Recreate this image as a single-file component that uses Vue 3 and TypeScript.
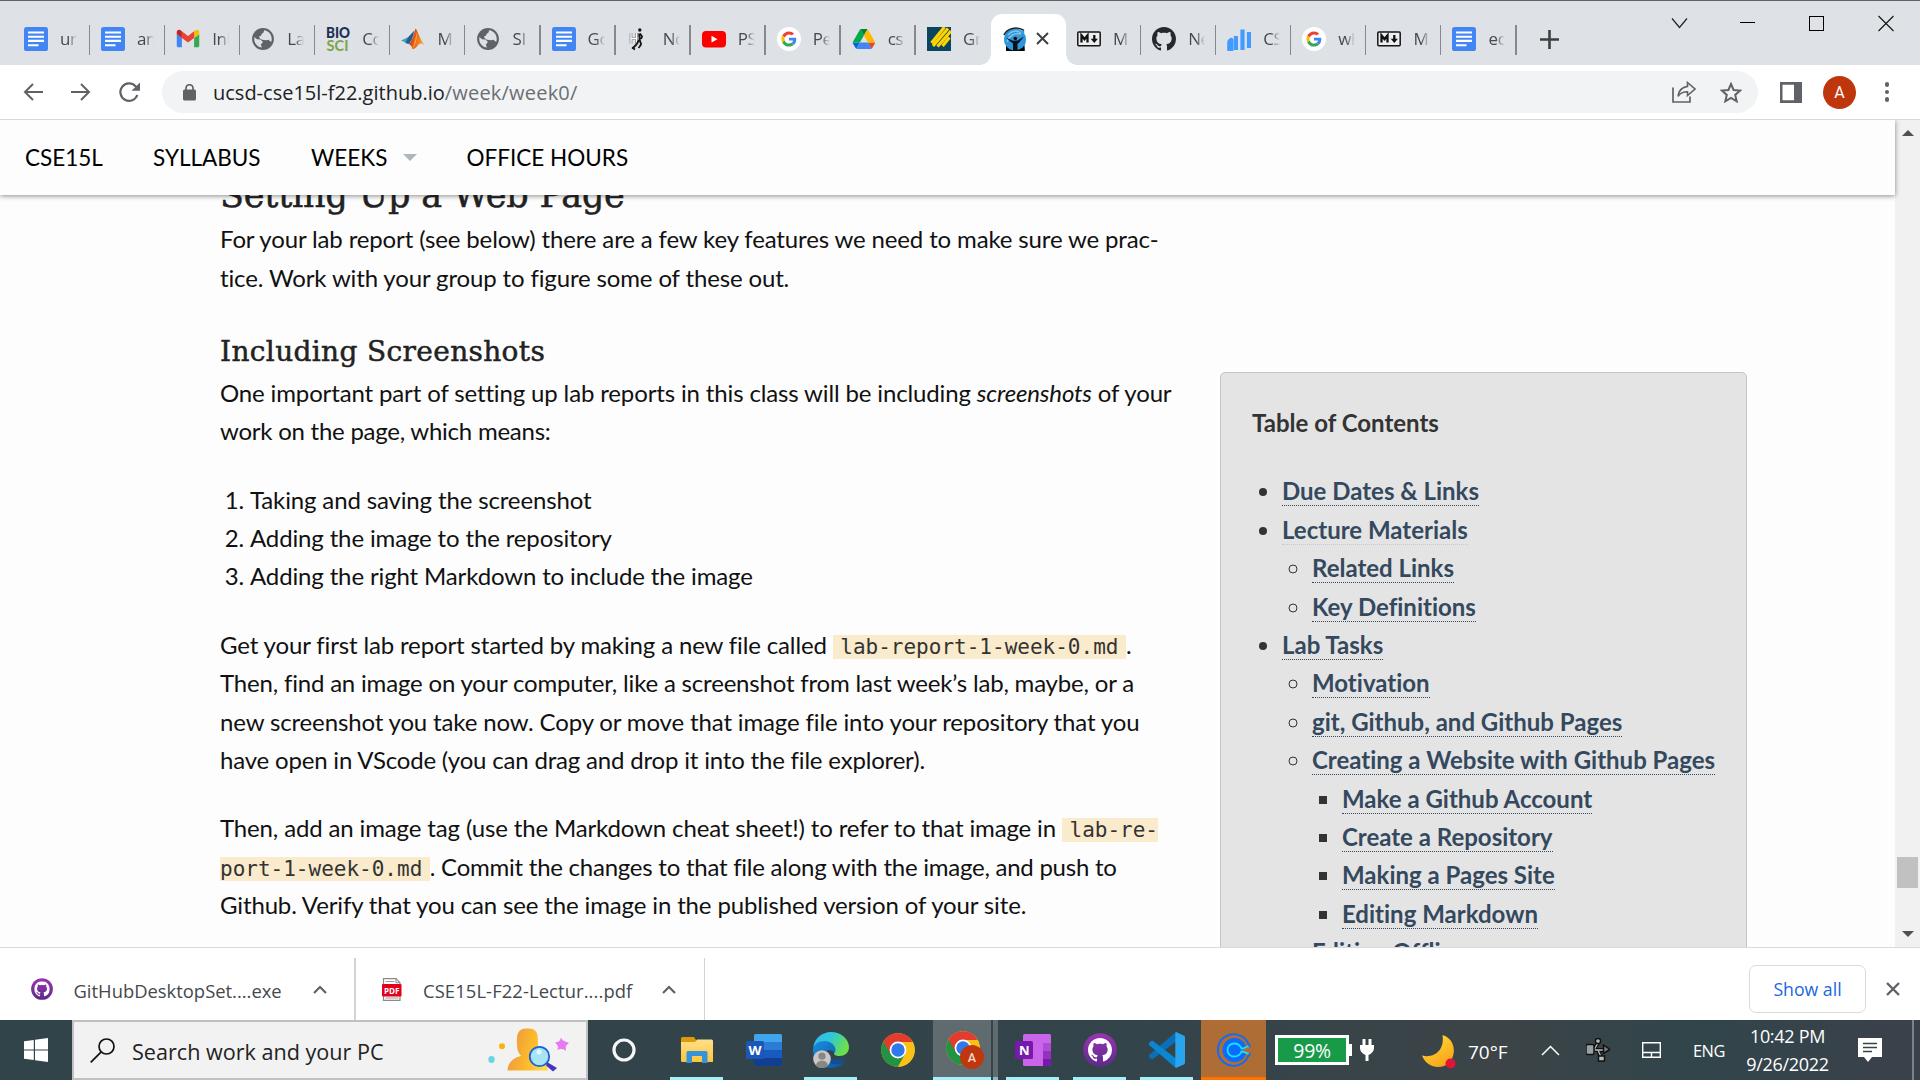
<script setup lang="ts">
interface Tab { icon: string; label: string; active?: boolean; sep?: boolean }
interface TocItem { text: string; level: number; faint?: boolean }

const tabs: Tab[] = [
  { icon: 'doc', label: 'uni', sep: true },
  { icon: 'doc', label: 'ann', sep: true },
  { icon: 'gmail', label: 'Inb', sep: true },
  { icon: 'globe', label: 'Lab', sep: true },
  { icon: 'biosci', label: 'Co', sep: true },
  { icon: 'matlab', label: 'M', sep: true },
  { icon: 'globe', label: 'SI I', sep: true },
  { icon: 'doc', label: 'Go', sep: true },
  { icon: 'runner', label: 'No', sep: true },
  { icon: 'youtube', label: 'PS', sep: true },
  { icon: 'google', label: 'Pe', sep: true },
  { icon: 'drive', label: 'cs', sep: true },
  { icon: 'gradescope', label: 'Gr' },
  { icon: 'person', label: '', active: true },
  { icon: 'markdown', label: 'M', sep: true },
  { icon: 'github', label: 'Ne', sep: true },
  { icon: 'chart', label: 'CS', sep: true },
  { icon: 'google', label: 'wh', sep: true },
  { icon: 'markdown', label: 'M', sep: true },
  { icon: 'doc', label: 'ec', sep: true },
]

const toc: TocItem[] = [
  { text: 'Due Dates & Links', level: 0 },
  { text: 'Lecture Materials', level: 0, faint: true },
  { text: 'Related Links', level: 1 },
  { text: 'Key Definitions', level: 1 },
  { text: 'Lab Tasks', level: 0 },
  { text: 'Motivation', level: 1 },
  { text: 'git, Github, and Github Pages', level: 1 },
  { text: 'Creating a Website with Github Pages', level: 1 },
  { text: 'Make a Github Account', level: 2 },
  { text: 'Create a Repository', level: 2 },
  { text: 'Making a Pages Site', level: 2 },
  { text: 'Editing Markdown', level: 2 },
  { text: 'Editing Offline', level: 1 },
]
</script>

<template>
  <svg class="sprite" width="0" height="0" aria-hidden="true">
    <defs>
      <linearGradient id="g-edge" x1="0" y1="0" x2="1" y2="0.4"><stop offset="0" stop-color="#35b8f0" /><stop offset="0.5" stop-color="#2fc8d8" /><stop offset="1" stop-color="#6be04a" /></linearGradient>
      <linearGradient id="g-edge2" x1="0" y1="0" x2="1" y2="1"><stop offset="0" stop-color="#1a8fe0" /><stop offset="1" stop-color="#0c4f9e" /></linearGradient>
      <linearGradient id="g-avatar" x1="0" y1="0.3" x2="1" y2="0.6"><stop offset="0" stop-color="#ec9440" /><stop offset="0.6" stop-color="#fdbb2c" /><stop offset="1" stop-color="#ffd84a" /></linearGradient>
      <linearGradient id="g-purple" x1="0" y1="0" x2="0" y2="1"><stop offset="0" stop-color="#9a34b0" /><stop offset="1" stop-color="#5c2a8c" /></linearGradient>
      <linearGradient id="g-folder" x1="0" y1="0" x2="0" y2="1"><stop offset="0" stop-color="#ffe08a" /><stop offset="1" stop-color="#fbc53c" /></linearGradient>
      <linearGradient id="g-moon" x1="0" y1="0" x2="0.6" y2="1"><stop offset="0" stop-color="#ffe23a" /><stop offset="1" stop-color="#f9a51a" /></linearGradient>
      <linearGradient id="g-matlab" x1="0" y1="0" x2="1" y2="0.3"><stop offset="0" stop-color="#7a1c10" /><stop offset="0.45" stop-color="#e8581c" /><stop offset="1" stop-color="#f9a02a" /></linearGradient>
    </defs>
    <symbol id="i-doc" viewBox="0 0 24 24">
      <rect width="24" height="24" rx="2.6" fill="#4285f4" />
      <path d="M4 5.500h16M4 9.800h16M4 13.900h16M4 18.200h10.500" stroke="#fff" stroke-width="2.100" />
    </symbol>
    <symbol id="i-gmail" viewBox="49 33 94 94">
      <path fill="#4285f4" d="M58 112h14V76L52 61v45c0 3.320 2.690 6 6 6" /><path fill="#34a853" d="M120 112h14c3.320 0 6-2.690 6-6V61l-20 15" />
      <path fill="#fbbc04" d="M120 50v26l20-15v-8c0-7.420-8.470-11.650-14.400-7.200" /><path fill="#ea4335" d="M72 76V50l24 18 24-18v26L96 94" />
      <path fill="#c5221f" d="M52 53v8l20 15V50l-5.600-4.200c-5.940-4.450-14.400-.22-14.400 7.200" />
    </symbol>
    <symbol id="i-globe" viewBox="1 1 22 22">
      <circle cx="12" cy="12" r="10" fill="#5f6368" />
      <path fill="#dee1e6" d="M11 19.900c-3.950-.49-7-3.850-7-7.930 0-.62.080-1.210.210-1.790L6.500 12.200l3.200.3 2.300 2.300-2 2.200z" />
      <path fill="#dee1e6" d="M8.200 9.200c1.200.7 2.300-.2 2.500-1.500.2-1.200 1.700-.8 2-2.300l.3-1.400c4 .5 7 3.800 7 8 0 1-.2 1.900-.5 2.700l-2.600-2.100-2.100.6-3.700-.6-2-1z" />
    </symbol>
    <symbol id="i-matlab" viewBox="0 0 24 24">
      <path fill="#3ba0c8" d="M0 13.500 7.500 10l3.500-3.500 2 1-5 9-3.200-.7z" /><path fill="#275c86" d="m7 10.500 4-4.500 2.500-2.500-3 10-3 3.500-3-1z" />
      <path fill="url(#g-matlab)" d="M14.500 1.500c2 1.500 4 10 9 16.500-2.500-2-4.500-2.200-6.500.3-1.600 2-3.200 3.700-5.500 4-.5-2.600-1.500-4.300-3.700-5.300 3.500-2 4.700-9.500 6.700-15.500z" />
      <path fill="#ffb43c" d="M15.500 5c.5 4 1 8.500-4 17.300.5-2.500 3.500-9 4-17.300z" />
    </symbol>
    <symbol id="i-runner" viewBox="0 0 24 24">
      <path d="M4 6v11M9.500 6v11M4 11.500h5.500" fill="none" stroke="#777" stroke-width="2.600" /><path d="M4 6v11M9.500 6v11M4 11.500h5.500" fill="none" stroke="#fff" stroke-width="1.300" />
      <circle cx="12.800" cy="3" r="1.700" fill="#151515" /><path d="m12 6.500.8 6.500M12.500 12.500l1.500 4.500-1 2.500M12 13l-2.500 4.500-4 4M13 6.500l2 3-1 2.500" fill="none" stroke="#151515" stroke-width="1.900" /><path d="m5 20.500 3 2M13 19l-1.500 2" stroke="#151515" stroke-width="1.600" />
    </symbol>
    <symbol id="i-youtube" viewBox="0 0 24 24"><rect y="4" width="24" height="16.500" rx="4" fill="#f00" /><path d="m9.500 8.800 6 3.400-6 3.400z" fill="#fff" /></symbol>
    <symbol id="i-google" viewBox="-14 -14 76 76">
      <circle cx="24" cy="24" r="38" fill="#fff" />
      <path fill="#ea4335" d="M24 9.500c3.540 0 6.710 1.220 9.210 3.600l6.850-6.850C35.900 2.380 30.470 0 24 0 14.620 0 6.510 5.380 2.560 13.220l7.980 6.190C12.430 13.720 17.740 9.500 24 9.500z" />
      <path fill="#4285f4" d="M46.980 24.550c0-1.570-.15-3.090-.38-4.550H24v9.020h12.940c-.58 2.960-2.260 5.480-4.780 7.180l7.730 6c4.510-4.180 7.090-10.360 7.090-17.650z" />
      <path fill="#fbbc05" d="M10.530 28.590c-.48-1.450-.76-2.990-.76-4.590s.27-3.140.76-4.590l-7.980-6.190C.92 16.460 0 20.120 0 24c0 3.880.92 7.540 2.560 10.780l7.970-6.190z" />
      <path fill="#34a853" d="M24 48c6.480 0 11.930-2.130 15.890-5.810l-7.730-6c-2.150 1.450-4.920 2.300-8.160 2.300-6.260 0-11.570-4.220-13.470-9.910l-7.980 6.190C6.510 42.620 14.620 48 24 48z" />
    </symbol>
    <symbol id="i-drive" viewBox="-3 -8 94 94">
      <path fill="#0066da" d="m6.600 66.850 3.850 6.650c.8 1.400 1.950 2.500 3.300 3.300l13.750-23.800H0c0 1.550.4 3.100 1.200 4.500z" />
      <path fill="#00ac47" d="M43.650 25 29.900 1.200c-1.350.8-2.500 1.900-3.300 3.300l-25.400 44A9.060 9.060 0 0 0 0 53h27.500z" />
      <path fill="#ea4335" d="M73.550 76.800c1.350-.8 2.500-1.900 3.300-3.300l1.600-2.750 7.650-13.250c.8-1.400 1.200-2.950 1.200-4.500H59.800l5.850 11.500z" />
      <path fill="#00832d" d="M43.650 25 57.400 1.200C56.050.4 54.500 0 52.900 0H34.400c-1.600 0-3.150.45-4.500 1.200z" />
      <path fill="#4285f4" d="M59.800 53H27.500L13.750 76.800c1.350.8 2.900 1.200 4.500 1.200h50.800c1.600 0 3.150-.45 4.500-1.200z" />
      <path fill="#ffba00" d="m73.400 26.500-12.700-22c-.8-1.400-1.950-2.500-3.300-3.300L43.650 25l16.150 28h27.450c0-1.550-.4-3.100-1.200-4.500z" />
    </symbol>
    <symbol id="i-gradescope" viewBox="0 0 24 24"><rect width="24" height="24" fill="#0b455f" /><path d="m4.500 16 13-16M6 19 21 1.500M10.500 19.500 24 4M15.500 19l7-8.500" stroke="#ffd400" stroke-width="3.100" fill="none" /></symbol>
    <symbol id="i-person" viewBox="0 0 24 24">
      <rect x="3" y="17" width="18.500" height="7" fill="#050505" /><circle cx="12" cy="12.500" r="11" fill="#2e96dc" /><path d="M5 8c4-4 9-5 13-2M4 15c2-6 8-10 14-8" fill="none" stroke="#7cc4ee" stroke-width="1.500" />
      <path d="M1 8C4 1 14-1 21 3.500" fill="none" stroke="#222" stroke-width="1.600" /><path d="m3 10.800 7 3 4.500-.2 6.500-4.100-5 6.300-1.500 1V24h-4.500v-7.500l-2-1.500z" fill="#081018" /><circle cx="12.300" cy="11.500" r="1.800" fill="#081018" /><circle cx="20" cy="5" r="1.400" fill="#2aa3ee" /><circle cx="15" cy="8" r=".8" fill="#f08030" />
      <path d="M3 20v4h4c-1-1.500-2-3-4-4zm18.500 0v4h-4c1-1.500 2-3 4-4z" fill="#050505" />
    </symbol>
    <symbol id="i-markdown" viewBox="0 0 24 24">
      <rect x=".8" y="5" width="22.400" height="13.800" rx="1" fill="#eceef1" stroke="#151515" stroke-width="1.500" /><path d="M4.500 15.500v-7l3 3.600 3-3.600v7" fill="none" stroke="#111" stroke-width="2.300" /><path d="M17.300 8v6" stroke="#111" stroke-width="2.300" /><path d="M13.700 11.800h7.200l-3.600 4.200z" fill="#111" />
    </symbol>
    <symbol id="i-github" viewBox="0 0 16 16"><path fill="currentColor" d="M8 0C3.580 0 0 3.580 0 8c0 3.540 2.290 6.530 5.470 7.590.4.070.55-.17.55-.38 0-.19-.01-.82-.01-1.490-2.010.37-2.530-.49-2.690-.94-.09-.23-.48-.94-.82-1.130-.28-.15-.68-.52-.01-.53.63-.01 1.080.58 1.230.82.72 1.210 1.870.87 2.330.66.070-.52.280-.87.510-1.070-1.780-.2-3.640-.89-3.640-3.950 0-.87.310-1.590.820-2.150-.08-.2-.36-1.020.080-2.120 0 0 .67-.21 2.200.82.640-.18 1.320-.27 2-.27s1.360.09 2 .27c1.530-1.040 2.200-.82 2.200-.82.440 1.100.160 1.920.080 2.120.510.560.820 1.270.820 2.150 0 3.070-1.870 3.750-3.650 3.950.290.250.540.730.540 1.480 0 1.070-.01 1.930-.01 2.200 0 .210.150.460.550.380A8.010 8.010 0 0 0 16 8c0-4.420-3.580-8-8-8z" /></symbol>
    <symbol id="i-chart" viewBox="0 0 24 24"><path d="M2.300 23v-7q0-2 2-3v10zM8.900 23V9M15.500 23V2.500M22 21V5" stroke="#429bff" stroke-width="4.200" fill="none" stroke-linejoin="round" /></symbol>
    <symbol id="i-chrome" viewBox="0 0 34 34">
      <circle cx="17" cy="17" r="16.800" fill="#fbc116" />
      <path d="M9 17 2.450 8.600A16.800 16.800 0 0 0 17 33.800l7.300-12.600z" fill="#229342" /><path d="M17 33.800 24.600 20.500 24 12 17 8.900h14.700A16.800 16.800 0 0 1 17 33.800z" fill="#fbc116" /><path d="M17 9H31.700a16.800 16.800 0 0 0-29.250-.4L9.800 21.300z" fill="#e33b2e" />
      <circle cx="17" cy="17" r="8.400" fill="#fff" /><circle cx="17" cy="17" r="6.700" fill="#2f78ee" />
    </symbol>
    <symbol id="i-ghdesktop" viewBox="0 0 34 34"><circle cx="17" cy="17" r="16.800" fill="url(#g-purple)" /><svg x="5" y="5" width="24" height="24" viewBox="0 0 16 16" color="#fff"><use href="#i-github" /></svg></symbol>
    <symbol id="i-up" viewBox="0 0 14 9"><path d="m1 8 6-6 6 6" fill="none" stroke="#5f6368" stroke-width="2.200" /></symbol>
  </svg>

  <div class="screen">
    <header class="tabstrip">
      <div v-for="(t, i) in tabs" :key="i" class="tab" :class="{ active: t.active, sep: t.sep }">
        <svg v-if="t.icon === 'biosci'" class="favicon" width="24" height="24" viewBox="0 0 24 24">
          <text x="0" y="11.300" font-family="Lato, sans-serif" font-weight="900" font-size="14.800" textLength="24" lengthAdjust="spacingAndGlyphs" fill="#1c2f57">BIO</text>
          <text x="0.500" y="23.600" font-family="Lato, sans-serif" font-weight="700" font-size="15" textLength="22" lengthAdjust="spacingAndGlyphs" fill="#7ba645">SCI</text>
        </svg>
        <svg v-else class="favicon" width="24" height="24"><use :href="'#i-' + t.icon" /></svg>
        <span v-if="!t.active" class="tab-label">{{ t.label }}</span>
        <svg v-else class="tab-close" width="13" height="13" viewBox="0 0 13 13"><path d="m1 1 11 11M12 1 1 12" stroke="#3c4043" stroke-width="2" /></svg>
      </div>
      <svg class="plus" width="19" height="19" viewBox="0 0 19 19"><path d="M9.500 0v19M0 9.500h19" stroke="#3c4043" stroke-width="2.600" /></svg>
      <div class="win">
        <svg width="69" height="46" viewBox="0 0 69 46"><path d="m27 18.500 7.500 9 7.500-9" fill="none" stroke="#222" stroke-width="1.200" /></svg>
        <svg width="69" height="46" viewBox="0 0 69 46"><path d="M26 22.500h15" stroke="#000" /></svg>
        <svg width="69" height="46" viewBox="0 0 69 46"><rect x="26.500" y="16.500" width="14" height="14" fill="none" stroke="#000" /></svg>
        <svg width="69" height="46" viewBox="0 0 69 46"><path d="m26.500 16 15 15m0-15-15 15" stroke="#111" stroke-width="1.100" /></svg>
      </div>
    </header>

    <div class="toolbar">
      <svg class="nav-i" width="20" height="18" viewBox="0 0 20 18"><path d="M20 9H2M10 1 2 9l8 8" fill="none" stroke="#5f6368" stroke-width="2" /></svg>
      <svg class="nav-i" width="20" height="18" viewBox="0 0 20 18"><path d="M0 9h18M10 1l8 8-8 8" fill="none" stroke="#5f6368" stroke-width="2" /></svg>
      <svg class="nav-i" width="22" height="20" viewBox="0 0 22 20"><path d="M18.300 13A8.700 8.700 0 1 1 16.500 4.200L18.500 6" fill="none" stroke="#5f6368" stroke-width="2.200" /><path d="M21 .5v8.300h-8.500z" fill="#5f6368" /></svg>
      <div class="omnibox">
        <svg width="13" height="17" viewBox="0 0 13 17"><rect y="5.500" width="13" height="11" rx="1.500" fill="#5f6368" /><path d="M3 6V4.200a3.500 3.500 0 0 1 7 0V6" fill="none" stroke="#5f6368" stroke-width="1.700" /></svg>
        <div class="url">ucsd-cse15l-f22.github.io<span>/week/week0/</span></div>
        <svg width="24" height="22" viewBox="0 0 24 22"><path d="M1 6.500V21h17v-5.500" fill="none" stroke="#5f6368" stroke-width="1.700" /><path d="M15.500 1.500 23 8l-7.500 6.500v-3.700c-4.500 0-7.200 1.200-9.500 4.500.6-5 3.500-9 9.500-9.900z" fill="none" stroke="#5f6368" stroke-width="1.600" /></svg>
        <svg class="star" width="22" height="21" viewBox="0 0 22 21"><path d="m11 2 2.600 6 6.500.6-4.900 4.300 1.500 6.400-5.700-3.400-5.700 3.400 1.500-6.400L1.900 8.600 8.400 8z" fill="none" stroke="#5f6368" stroke-width="2" /></svg>
      </div>
      <svg class="panel" width="22" height="21" viewBox="0 0 22 21"><path fill="#5f6368" fill-rule="evenodd" d="M0 0h22v21H0zM2.500 2.800v15.400h11.500V2.800z" /></svg>
      <div class="avatar">A</div>
      <div class="kebab"><i /><i /><i /></div>
    </div>

    <div class="page">
      <div class="view">
        <nav class="site-nav">
          <span class="n1">CSE15L</span><span class="n2">SYLLABUS</span><span class="n3">WEEKS</span><i class="caret" /><span class="n4">OFFICE HOURS</span>
        </nav>
        <article>
          <h2>Setting Up a Web Page</h2>
          <p class="tight">For your lab report (see below) there are a few key features we need to make sure we prac-<br>tice. Work with your group to figure some of these out.</p>
          <h3>Including Screenshots</h3>
          <p>One important part of setting up lab reports in this class will be including <em>screenshots</em> of your<br><span class="snug">work on the page, which means:</span></p>
          <ol>
            <li>Taking and saving the screenshot</li>
            <li>Adding the image to the repository</li>
            <li>Adding the right Markdown to include the image</li>
          </ol>
          <p>Get your first lab report started by making a new file called <code>lab-report-1-week-0.md</code>.<br><span class="close">Then, find an image on your computer, like a screenshot from last week’s lab, maybe, or a</span><br>new screenshot you take now. Copy or move that image file into your repository that you<br><span class="close">have open in VScode (you can drag and drop it into the file explorer).</span></p>
          <p>Then, add an image tag (use the Markdown cheat sheet!) to refer to that image in <code>lab-re-<br>port-1-week-0.md</code><span class="snug">. Commit the changes to that file along with the image, and push to</span><br>Github. Verify that you can see the image in the published version of your site.</p>
        </article>
        <aside>
          <div class="toc-title">Table of Contents</div>
          <ul>
            <li v-for="item in toc" :key="item.text" :class="['l' + item.level, { faint: item.faint }]"><a>{{ item.text }}</a></li>
          </ul>
        </aside>
      </div>
      <div class="scrollbar"><i class="up" /><b /><i class="down" /></div>
    </div>

    <div class="downloads">
      <div class="dl d1">
        <svg width="22" height="22"><use href="#i-ghdesktop" /></svg>
        <span>GitHubDesktopSet....exe</span>
        <svg class="chev" width="14" height="9"><use href="#i-up" /></svg>
      </div>
      <div class="dl d2">
        <svg width="20" height="23" viewBox="0 0 20 23"><path d="M1.500.7H14l4 4v17.600H1.500z" fill="#fff" stroke="#8b8b8b" stroke-width="1.200" /><path d="M3.500 3.500h9M3.500 20h13" stroke="#999" /><path d="M14 .7v4h4" fill="none" stroke="#8b8b8b" /><rect y="6" width="19.500" height="12.500" rx="1" fill="#e2001a" /><text x="2" y="15.600" font-family="Open Sans, sans-serif" font-weight="700" font-size="9" textLength="15.500" lengthAdjust="spacingAndGlyphs" fill="#fff">PDF</text></svg>
        <span>CSE15L-F22-Lectur....pdf</span>
        <svg class="chev" width="14" height="9"><use href="#i-up" /></svg>
      </div>
      <button class="show-all">Show all</button>
      <svg class="dl-close" width="14" height="14" viewBox="0 0 14 14"><path d="m1 1 12 12M13 1 1 13" stroke="#5f6368" stroke-width="2.400" /></svg>
    </div>

    <footer class="taskbar">
      <div class="start"><svg width="24" height="24" viewBox="0 0 24 24" fill="#fff"><path d="M0 3.300 9.800 2v9.400H0zM11 1.800 24 0v11.400H11zM0 12.600h9.800V22L0 20.700zM11 12.600h13V24l-13-1.800z" /></svg></div>
      <div class="search">
        <svg width="25" height="25" viewBox="0 0 25 25"><circle cx="16.500" cy="8.500" r="7.500" fill="none" stroke="#111" stroke-width="1.700" /><path d="m11.200 13.800-10.500 10.500" stroke="#111" stroke-width="1.700" /></svg>
        <span>Search work and your PC</span>
        <svg class="art" width="82" height="44" viewBox="0 0 82 44">
          <ellipse cx="3.500" cy="31.500" rx="3.200" ry="3.400" fill="#69d5e2" /><circle cx="14" cy="18.300" r="3" fill="#fdb10c" />
          <path d="M19.500 42.500c0-7 6-13.500 14-14.500-3-2-4.500-6-4.500-12.500 0-9 0-15 10.500-15S50 6.500 50 15.500c0 6.500-1.500 10.500-4.500 12.500 8 1 14.500 8 14.500 14.500z" fill="url(#g-avatar)" />
          <path d="m59 34 10 6-4 3.500-7-6z" fill="#4433c8" /><circle cx="51.500" cy="28.500" r="9.700" fill="#a8e4f5" stroke="#1c62d8" stroke-width="1.800" /><circle cx="51" cy="24" r="2.500" fill="#e4f9ff" />
          <path d="M73 9.500c1.500 3.500 3 3.500 8 5.500-3.500 2.500-3.500 4-3 8-3.500-2.500-4.500-2.500-8.500-1 1-3.500.5-4.500-2.500-7.500 4-.5 5-1.500 6-5z" fill="#e77af0" />
        </svg>
      </div>
      <div class="apps">
        <div class="app cortana"><svg width="24" height="24" viewBox="0 0 24 24"><circle cx="12" cy="12" r="10" fill="none" stroke="#f6f6f6" stroke-width="3.200" /></svg></div>
        <div class="app run"><svg width="32" height="27" viewBox="0 0 32 27"><path d="M0 1.500Q0 0 1.500 0H13l2 3v4H0z" fill="#dc9a08" /><path d="M0 5h14l2-2.500h14.500q1.500 0 1.500 1.500v20.500q0 .5-1.500.5h-29Q0 25 0 23.500z" fill="url(#g-folder)" /><path d="M5.500 26V15.500q0-1.500 1.500-1.500h18q1.500 0 1.500 1.500V26H21v-7H11v7z" fill="#3693db" /></svg></div>
        <div class="app"><svg width="36" height="32" viewBox="0 0 36 32"><rect x="8" width="28" height="32" rx="1.500" fill="#41a5ee" /><path d="M8 8h28v8H8z" fill="#2b7cd3" /><path d="M8 16h28v8H8z" fill="#185abd" /><path d="M8 24h28v6.500q0 1.500-1.500 1.500h-25Q8 32 8 30.500z" fill="#103f91" /><rect y="7" width="18" height="18" rx="1.500" fill="#1b57b8" /><text x="2.500" y="20.500" font-family="Open Sans, sans-serif" font-weight="700" font-size="12.500" textLength="13" lengthAdjust="spacingAndGlyphs" fill="#fff">W</text></svg></div>
        <div class="app run"><svg width="36" height="36" viewBox="0 0 36 36"><path d="M.3 15C1.500 6.500 9 0 18 0c10.500 0 18 7.500 18 15 0 6-4.500 9-9.500 9-4 0-6-1.500-5.500-3 2-4-.5-9-6.500-9C8 12 3 14 .3 15z" fill="url(#g-edge)" /><path d="M0 18.500C0 12 5.500 9 11.500 9c6.500 0 11 4.500 11 9 0 1.500-.5 2.500-1 3-2-3-5.500-4-7.500-2-3 3-2 13 8.500 13 4 0 7-1 9.500-3-3 4.500-8 7-14 7C8 36 0 28 0 18.500z" fill="url(#g-edge2)" /><path d="M17.500 17c-4 4-1 10.500 5.500 10.500 3.500 0 6.500-.8 9.500-2.500-1.500 3.500-4.500 6.500-8.500 7-7 .5-12-7-6.500-15z" fill="#124f94" /><circle cx="9" cy="27" r="8.800" fill="#c8c8c8" /><circle cx="9" cy="24.200" r="3.600" fill="#8a8684" /><path d="M3 34c0-7 12-7 12 0-3.500 2.500-8.500 2.500-12 0z" fill="#8a8684" /></svg></div>
        <div class="app"><svg width="34" height="34"><use href="#i-chrome" /></svg></div>
        <div class="app current"><svg width="38" height="38" viewBox="0 0 38 38"><svg x="0" y="0" width="34" height="34"><use href="#i-chrome" /></svg><circle cx="26" cy="26" r="12" fill="#c0370d" /><text x="26" y="30.500" text-anchor="middle" font-family="Roboto, sans-serif" font-weight="500" font-size="12.500" fill="#f3d9d0">A</text></svg></div>
        <div class="app run"><svg width="36" height="32" viewBox="0 0 36 32"><rect x="8" width="28" height="32" rx="1.500" fill="#ca64ea" /><path d="M28 9h8v8h-8z" fill="#ae4bd5" /><path d="M28 17h8v8h-8z" fill="#9332bf" /><path d="M28 25h8v5.500q0 1.500-1.500 1.500H28z" fill="#7719aa" /><rect y="7" width="18" height="18" rx="1.500" fill="#7719aa" /><text x="4" y="20.700" font-family="Open Sans, sans-serif" font-weight="700" font-size="13" fill="#fff">N</text></svg></div>
        <div class="app run"><svg width="34" height="34"><use href="#i-ghdesktop" /></svg></div>
        <div class="app run"><svg width="36" height="36" viewBox="0 0 36 36"><path d="M27 0v9.500L4 27q-1 .7-2 0l-2-2q-.7-1 0-2z" fill="#0a6fb8" /><path d="M27 36v-9.500L4 9q-1-.7-2 0l-2 2q-.7 1 0 2z" fill="#0b86d1" /><path d="m27 0 7.700 3.500q1.300.6 1.300 2v25q0 1.400-1.300 2L27 36q-.7-.3-.7-1.500v-33Q26.300.3 27 0z" fill="#28a5ec" /></svg></div>
        <div class="app calendly"><svg width="34" height="34" viewBox="0 0 34 34"><path d="M31.500 11.500A15.800 15.800 0 1 0 31.500 22.500q1.500-1.500 0-2.800M31.500 11.500q1.500 1.500 0 2.800" fill="none" stroke="#0b6bff" stroke-width="1.900" /><circle cx="17.500" cy="17" r="12" fill="#0b6bff" /><path d="M26 14.500 34 11v12l-8-3.500z" fill="#ad6d35" /><path d="M32.500 13.200c-4 .3-4.500 2.300-8 2.300-1.500-4-4.500-5-7.500-5a6.500 6.500 0 0 0 0 13c3 0 6-1 7.500-5 3.500 0 4 2 8 2.300" fill="none" stroke="#16e4f5" stroke-width="1.800" /><path d="M31.500 11.500q1.800 1 1 2.500M31.500 22.500q1.800-1 1-2.500" fill="none" stroke="#0b6bff" stroke-width="1.900" /></svg></div>
      </div>
      <div class="tray">
        <div class="battery"><span>99%</span></div><i class="nub" />
        <svg class="plug" width="14" height="24" viewBox="0 0 14 24"><path d="M2.500 1h3v6h3V1h3v6H14v3c0 3-2 5.500-5.500 7v6h-3v-6C2 15.500 0 13 0 10V7h2.500z" fill="#fff" /></svg>
        <svg class="moon" width="34" height="34" viewBox="0 0 34 34"><path d="M20.500 0C28 2 32.500 9 31.800 17 31 26 24.500 32 16 32 9 32 3 28 0 20.500c11 3 23-4 20.500-20.500z" fill="url(#g-moon)" /><circle cx="28.500" cy="28.500" r="5" fill="#e01438" /></svg>
        <span class="temp">70°F</span>
        <svg class="tray-up" width="19" height="11" viewBox="0 0 19 11"><path d="m1 10 8.500-8.500L18 10" fill="none" stroke="#fff" stroke-width="1.500" /></svg>
        <svg class="usb" width="24" height="24" viewBox="0 0 24 24"><path d="M5 12h14M8 11l4-6M12 12l3 8" stroke="#111" stroke-width="4" /><path d="M8 12h10M8.500 11l3.500-6M12 12l3 7" stroke="#b4babc" stroke-width="1.400" /><rect y="6.500" width="8" height="10" rx="1.500" fill="#9aa0a2" stroke="#111" stroke-width="1.500" /><circle cx="12" cy="3" r="2.600" fill="#bbb" stroke="#111" stroke-width="1.500" /><rect x="12.500" y="18" width="6" height="5" fill="#bbb" stroke="#111" stroke-width="1.500" /><path d="m17.500 7 6.500 4.500-6.500 4z" fill="#777" stroke="#111" stroke-width="1.500" /></svg>
        <svg class="pad" width="19" height="16" viewBox="0 0 19 16"><path d="M.7.7h17.600v14.600H.7zM.7 10.500h17.600M9.500 10.500v5" fill="none" stroke="#fff" stroke-width="1.400" /></svg>
        <span class="eng">ENG</span>
        <div class="clock"><span>10:42 PM</span><span>9/26/2022</span></div>
        <svg class="note" width="24" height="24" viewBox="0 0 24 24"><path d="M0 0h24v19H14l-4 5-4-5H0z" fill="#fff" /><path d="M5 5.500h14M5 9.500h14M5 13.500h9" stroke="#33444a" stroke-width="1.500" /></svg>
        <i class="edge" />
      </div>
    </footer>
  </div>
</template>

<style>
body { margin: 0; overflow: hidden; }
</style>

<style scoped>
.sprite { position: absolute; }
svg { flex: none; display: block; }
.screen { width: 1920px; height: 1080px; display: flex; flex-direction: column; overflow: hidden; background: #fff; font-family: "Open Sans", "Noto Sans", sans-serif; }

.tabstrip { height: 64px; border-top: 1px solid #606267; background: #dee1e6; display: flex; padding-left: 15px; flex: none; }
.tab { width: 75.080px; height: 51px; margin-top: 13px; display: flex; align-items: flex-start; box-sizing: border-box; position: relative; padding-left: 11px; flex: none; }
.tab:first-child { padding-left: 9px; }
.favicon { margin-top: 13px; color: #24292f; }
.tab.sep::after { content: ""; position: absolute; right: 0; top: 11px; width: 1.500px; height: 30px; background: #85888d; }
.tab-label { margin: 12px 0 0 12px; width: 17px; height: 26px; line-height: 26px; overflow: hidden; white-space: nowrap; font-size: 17px; letter-spacing: -0.400px; color: #45484c; -webkit-mask-image: linear-gradient(90deg, #000 45%, transparent); mask-image: linear-gradient(90deg, #000 45%, transparent); }
.tab.active { background: #fff; border-radius: 11px 11px 0 0; padding-left: 12px; }
.tab.active::before, .tab.active::after { content: ""; position: absolute; bottom: 0; width: 11px; height: 11px; }
.tab.active::before { left: -11px; background: radial-gradient(circle at 0 0, transparent 10.500px, #fff 11px); }
.tab.active::after { right: -11px; background: radial-gradient(circle at 100% 0, transparent 10.500px, #fff 11px); }
.tab-close { margin: 18px 0 0 9px; }
.plus { margin: 29px 0 0 23px; }
.win { display: flex; margin: -1px -1px 0 auto; }

.toolbar { height: 54px; border-bottom: 1px solid #d6d8da; background: #fff; display: flex; align-items: center; flex: none; padding-left: 23px; box-sizing: content-box; }
.nav-i { margin-right: 28px; }
.nav-i:nth-child(3) { margin-right: 21px; }
.omnibox { width: 1596px; height: 42px; border-radius: 21px; background: #f1f3f4; display: flex; align-items: center; box-sizing: border-box; padding: 0 16px 0 21px; }
.url { margin-left: 17px; flex: 1; font-size: 20px; color: #202124; white-space: nowrap; }
.url span { color: #6b6f74; letter-spacing: 0.200px; }
.star { margin-left: 24px; }
.panel { margin-left: 22px; }
.avatar { width: 33px; height: 33px; border-radius: 50%; background: #bf360c; color: #fff; font: 400 16px/34px Roboto, sans-serif; text-align: center; margin-left: 21px; }
.kebab { margin-left: 28.500px; display: flex; flex-direction: column; gap: 3px; }
.kebab i { width: 4.500px; height: 4.500px; border-radius: 50%; background: #5f6368; }

.page { height: 827px; display: flex; flex: none; overflow: hidden; }
.view { width: 1895px; position: relative; background: #fdfdfd; display: flex; font-family: Lato, sans-serif; font-size: 24px; line-height: 38.400px; color: #111; white-space: nowrap; font-variant-ligatures: none; }
.site-nav { position: absolute; z-index: 2; left: 0; top: 0; width: 1895px; height: 75px; box-sizing: border-box; background: #fdfdfd; box-shadow: 0 1px 5px rgba(0, 0, 0, 0.450); display: flex; align-items: center; padding: 0 0 0 25px; color: #000; font-size: 22.500px; line-height: 75px; }
.site-nav .n1 { width: 128px; } .site-nav .n2 { width: 158px; } .site-nav .n3 { width: 91.500px; } .site-nav .n4 { margin-left: 50px; }
.caret { border: 7.500px solid transparent; border-bottom: 0; border-top: 7px solid #acb6bb; }
article { padding: 47.500px 0 0 220px; width: 1220px; box-sizing: border-box; flex: none; letter-spacing: -0.140px; }
h2, h3 { font-family: "DejaVu Serif", serif; font-weight: 400; color: #222; -webkit-text-stroke: 0.500px #222; }
h2 { margin: 0; height: 52.700px; font-size: 35px; line-height: 54px; letter-spacing: -0.180px; }
h3 { margin: 35px 0 0; height: 41.700px; font-size: 28px; line-height: 40px; letter-spacing: 0.350px; }
p { margin: 0 0 30px; }
p.tight { margin: 0; }
.close { letter-spacing: -0.185px; }
.snug { letter-spacing: -0.245px; }
ol { margin: 0 0 30px; padding-left: 30px; }
code { font-family: "DejaVu Sans Mono", monospace; font-size: 21px; line-height: 1; letter-spacing: 0; color: #333; background: #faebcd; padding: 0 7.500px; }
aside { margin-top: 252px; width: 527px; height: 700px; box-sizing: border-box; border: 1px solid #c4c6c6; border-radius: 5px; background: #e4e4e4; padding: 31px 31px; font-weight: 700; color: #333; }
.toc-title { margin-bottom: 30px; }
ul { margin: 0; padding: 0; list-style: none; }
li.l0 { list-style: disc; margin-left: 30px; }
li.l1 { list-style: circle; margin-left: 60px; }
li.l2 { list-style: square; margin-left: 90px; }
aside a { color: #34495e; border-bottom: 1px dotted #34495e; padding-bottom: 0; }
aside li.faint a { border-color: #c3c8cc; }
.scrollbar { width: 25px; background: #f1f1f1; display: flex; flex-direction: column; align-items: center; box-sizing: border-box; padding: 10px 0; }
.scrollbar i { border: 6px solid transparent; }
.scrollbar .up { border-top: 0; border-bottom-color: #505050; }
.scrollbar .down { border-bottom: 0; border-top-color: #505050; margin-top: auto; }
.scrollbar b { margin-top: 721px; width: 21px; height: 31px; background: #c1c1c1; }

.downloads { height: 72px; border-top: 1px solid #d9dadb; background: #fff; display: flex; flex: none; font-size: 18.400px; color: #45484c; }
.dl { height: 62px; margin-top: 10px; display: flex; align-items: center; border-right: 2px solid #d2d3d4; box-sizing: border-box; white-space: nowrap; }
.dl span { padding-top: 2px; }
.d1 { width: 356px; padding-left: 31px; } .d1 span { margin-left: 20.500px; width: 239.500px; }
.d2 { width: 349px; padding-left: 26px; border-right-width: 1px; } .d2 span { margin-left: 21px; width: 239px; letter-spacing: 0.100px; }
.show-all { margin: 17px 0 0 auto; width: 117px; height: 48px; border: 1px solid #d9dbde; border-radius: 7px; background: #fff; color: #1a66e0; font: 17.700px "Open Sans", sans-serif; padding: 0 0 1px; white-space: nowrap; }
.dl-close { margin: 34px 20px 0 20px; }

.taskbar { height: 60px; flex: none; display: flex; background: linear-gradient(90deg, #30444a, #33444a 60%, #3c4447 78%, #31454b 88%, #3b414b); color: #fff; }
.start { width: 72px; display: flex; align-items: center; justify-content: center; }
.search { width: 516px; height: 60px; box-sizing: border-box; border: 2px solid #c1c1c1; background: #f2f2f2; display: flex; align-items: center; padding-left: 16px; color: #222; font-size: 21.600px; }
.search span { margin-left: 17px; flex: 1; white-space: nowrap; padding-top: 2px; }
.art { margin-right: 16px; }
.apps { display: flex; padding-left: 2px; }
.app { width: 67px; height: 60px; display: flex; align-items: center; justify-content: center; position: relative; }
.app.cortana { width: 68px; margin-right: 5px; }
.app.run::after { content: ""; position: absolute; bottom: 0; left: 7px; width: 53px; height: 3px; background: #a5effb; }
.app.current { background: #5f6b6e; width: 58px; margin: 0 8px 0 2px; padding: 3px 0 0 6px; border-bottom: 3px solid #a5effb; box-sizing: border-box; }
.app.current::after { content: ""; position: absolute; left: 60px; top: 0; width: 5px; height: 57px; background: #5f6b6e; border-bottom: 3px solid #86bcc3; }
.app.calendly { background: #ad6d35; border-bottom: 3px solid #ff7200; box-sizing: border-box; width: 65px; margin-left: 1px; padding-top: 3px; }
.tray { display: flex; align-items: center; flex: 1; }
.battery { width: 74px; height: 30px; box-sizing: border-box; border: 3px solid #fff; background: #179b49; margin-left: 9px; font-size: 19.400px; text-align: center; line-height: 26px; letter-spacing: -0.300px; }
.nub { width: 3px; height: 12px; background: #fff; }
.plug { margin-left: 8px; }
.moon { margin: 3px 0 0 48px; }
.temp { margin-left: 12px; width: 73px; font-size: 19px; padding-top: 3px; }
.usb { margin-left: 26px; } .pad { margin-left: 32px; }
.eng { margin-left: 32px; width: 32px; font-size: 16.400px; letter-spacing: -0.500px; }
.clock { margin-left: 20px; width: 85px; display: flex; flex-direction: column; align-items: center; font-size: 18px; line-height: 28px; white-space: nowrap; letter-spacing: -0.300px; }
.note { margin-left: 28px; }
.edge { margin-left: auto; margin-right: 6px; width: 2px; height: 60px; background: #7c8388; }
</style>
